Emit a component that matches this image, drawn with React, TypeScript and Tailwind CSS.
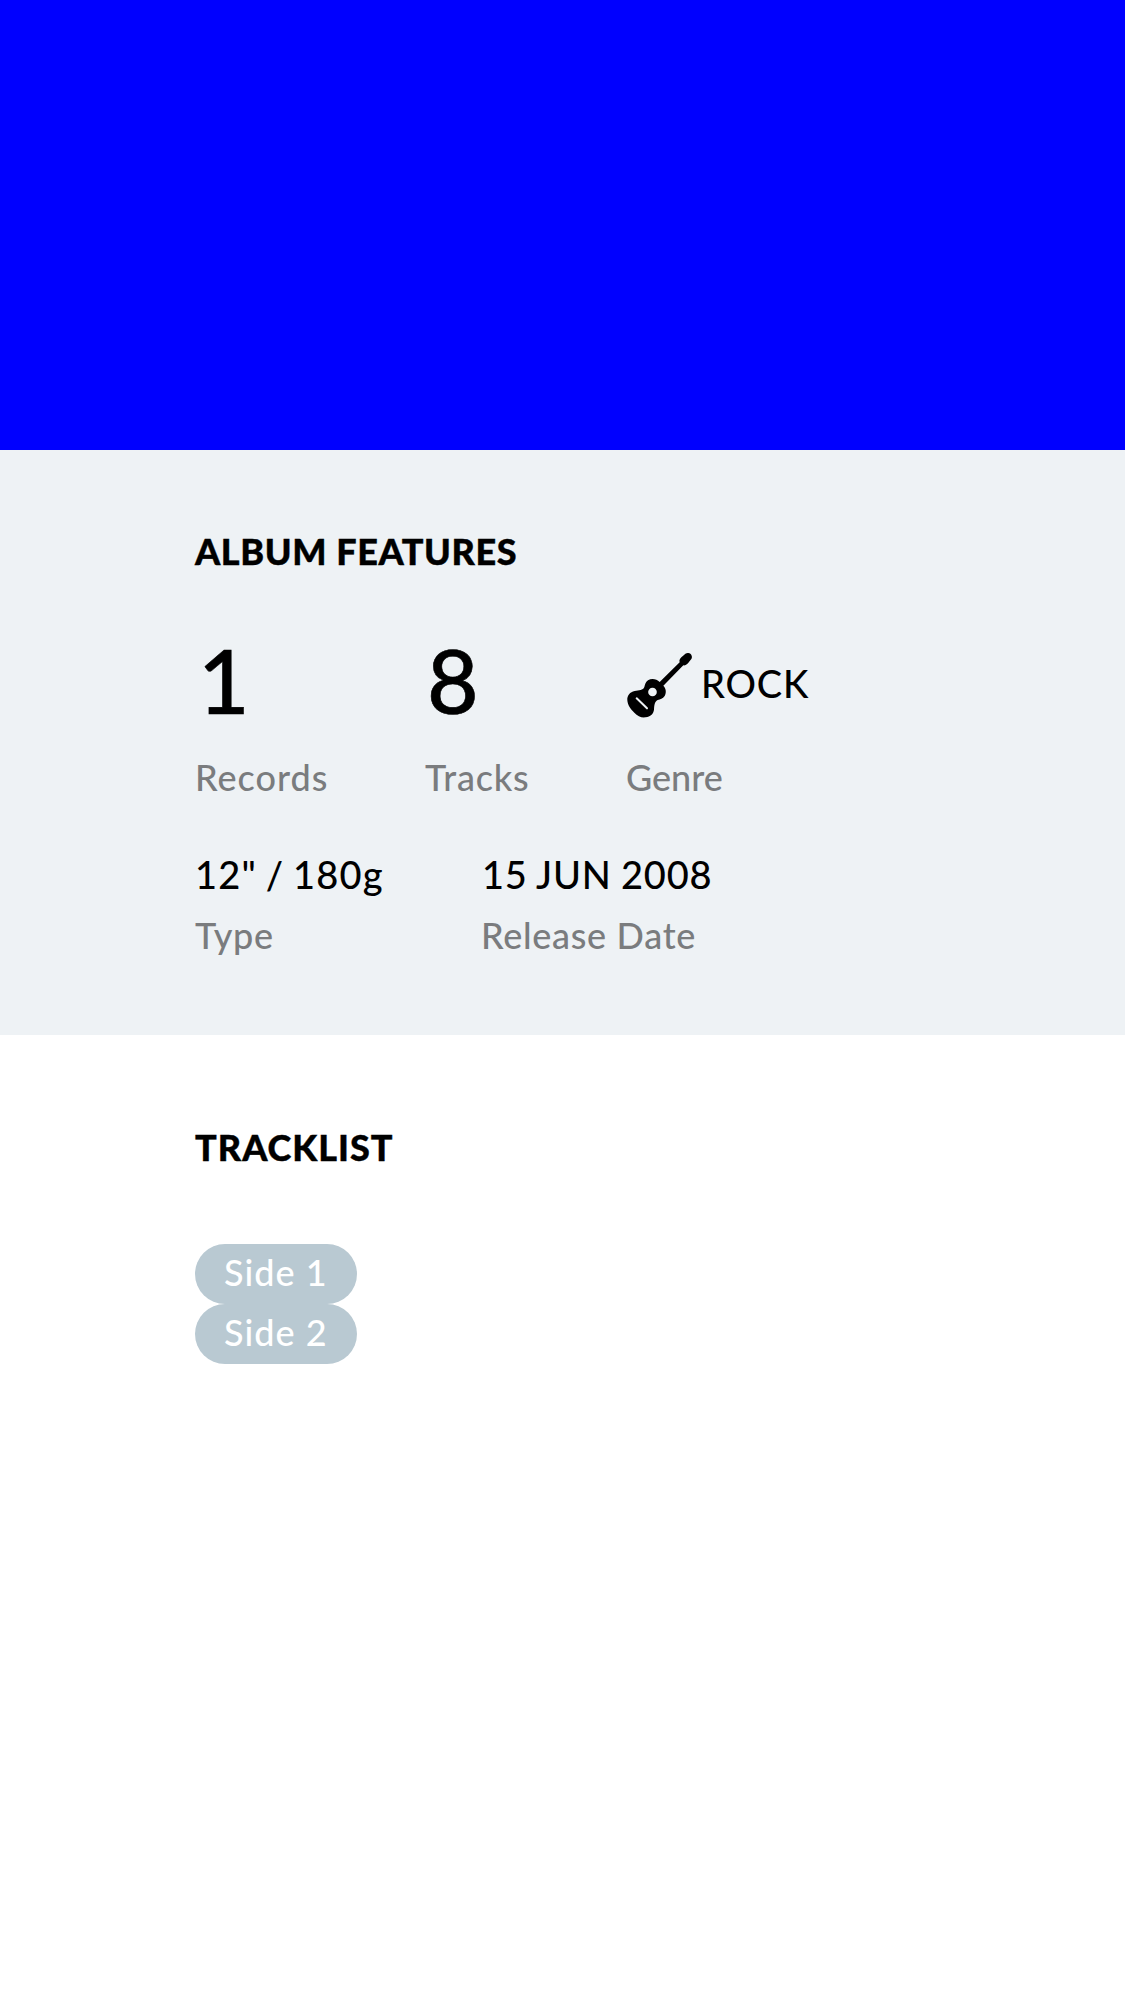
import React from 'react';

const label = 'text-[36px] leading-[48px] font-medium text-[#7a7c7e] whitespace-nowrap';
const value = 'text-[38px] leading-[48px] font-medium whitespace-nowrap';
const big = 'h-[126px] text-[89px] leading-[108px] font-medium [-webkit-text-stroke:0.6px_#000]';
const title = 'text-[36px] leading-[48px] font-black whitespace-nowrap [-webkit-text-stroke:0.4px_#000]';
const pill =
  'h-[60px] w-[162px] rounded-full bg-[#b9c9d2] pl-[29px] text-[36px] leading-[56px] font-medium tracking-[1.04px] text-white whitespace-nowrap';

function Guitar() {
  return (
    <svg viewBox="0 0 240 240" className="h-20 w-20 shrink-0" aria-hidden="true">
      <path
        d="M205 24 C200 23 196 26 192 30 L184 37 C179 42 177 46 179 52 L119 111 C110 102 95 99 84 106 C76 112 75 119 73 126 C69 137 57 135 44 138 C30 141 21 151 22 166 C23 181 32 193 43 203 C53 213 64 219 77 217 C91 215 100 207 102 194 C103 181 103 171 113 165 C121 162 128 162 134 153 C140 142 138 130 130 122 L190 61 C195 62 200 59 204 55 L211 46 C215 42 217 37 215 32 C213 27 210 24 205 24 Z"
        fill="#000"
      />
      <circle cx="97.5" cy="141" r="13" fill="#eef2f5" />
      <path d="M50 160 L81 190" stroke="#eef2f5" strokeWidth="6" strokeLinecap="round" />
    </svg>
  );
}

export default function App() {
  return (
    <main className="min-h-[2001px] w-full overflow-hidden bg-white font-['Lato',sans-serif] text-black">
      <div className="h-[450px] bg-[#0000ff]" />
      <section className="h-[585px] bg-[#eef2f5] pt-[77px] pl-[195px]">
        <h2 className={`${title} tracking-[0.6px]`}>ALBUM FEATURES</h2>
        <div className="mt-[51px] flex">
          <div className="w-[230px]">
            <div className={`${big} pl-[3px]`}>1</div>
            <div className={`${label} mt-px tracking-[1px]`}>Records</div>
          </div>
          <div className="w-[201px]">
            <div className={`${big} pl-[2px]`}>8</div>
            <div className={`${label} mt-px tracking-[0.8px]`}>Tracks</div>
          </div>
          <div>
            <div className="-ml-[6px] flex h-[126px] items-start pt-[19px]">
              <Guitar />
              <span className={`${value} mt-[14px] ml-px tracking-[0.85px]`}>ROCK</span>
            </div>
            <div className={`${label} mt-px`}>Genre</div>
          </div>
        </div>
        <div className="mt-[49px] flex">
          <div className="w-[287px]">
            <div className={`${value} tracking-[1.2px] [word-spacing:-2px]`}>12" / 180g</div>
            <div className={`${label} mt-[13px] tracking-[0.6px]`}>Type</div>
          </div>
          <div>
            <div className={`${value} tracking-[0.8px] [word-spacing:-1px]`}>15 JUN 2008</div>
            <div className={`${label} -ml-px mt-[13px] tracking-[0.7px]`}>Release Date</div>
          </div>
        </div>
      </section>
      <section className="pt-[88px] pl-[195px]">
        <h2 className={`${title} tracking-[1px]`}>TRACKLIST</h2>
        <div className="mt-[73px] flex flex-col">
          <div className={pill}>Side 1</div>
          <div className={pill}>Side 2</div>
        </div>
      </section>
    </main>
  );
}
